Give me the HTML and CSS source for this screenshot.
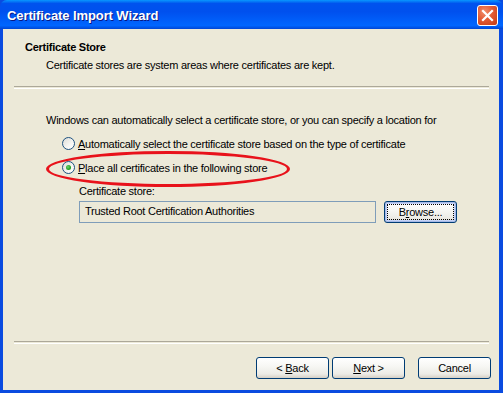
FILE: index.html
```html
<!DOCTYPE html>
<html lang="en">
<head>
    <meta charset="UTF-8">
    <title>Certificate Import Wizard</title>
    <link rel="stylesheet" href="styles.css">
</head>
<body>
    <div class="window">
        <div class="titlebar">
            <span class="title">Certificate Import Wizard</span>
            <button class="close-btn" aria-label="Close">
                <svg width="13" height="13" viewBox="0 0 13 13">
                    <path d="M2 2 L11 11 M11 2 L2 11" stroke="#fff" stroke-width="2.2" stroke-linecap="square"/>
                </svg>
            </button>
        </div>
        <div class="client">
            <div class="header">
                <div class="header-title">Certificate Store</div>
                <div class="header-sub">Certificate stores are system areas where certificates are kept.</div>
            </div>
            <div class="separator"></div>

            <div class="body">
                <p class="intro">Windows can automatically select a certificate store, or you can specify a location for</p>
                <label class="radio-row">
                    <span class="radio"></span>
                    <span><u>A</u>utomatically select the certificate store based on the type of certificate</span>
                </label>
                <label class="radio-row">
                    <span class="radio checked"></span>
                    <span><u>P</u>lace all certificates in the following store</span>
                </label>
                <div class="highlight"></div>

                <div class="store">
                    <div class="store-label">Certificate store:</div>
                    <div class="store-row">
                        <div class="textbox">Trusted Root Certification Authorities</div>
                        <button class="btn focused"><span class="focus-ring">B<u>r</u>owse...</span></button>
                    </div>
                </div>
            </div>

            <div class="separator"></div>
            <div class="footer">
                <button class="btn">&lt; <u>B</u>ack</button>
                <button class="btn"><u>N</u>ext &gt;</button>
                <button class="btn cancel">Cancel</button>
            </div>
        </div>
    </div>
</body>
</html>
```
FILE: styles.css
```css
body {
    margin: 0;
    padding: 0;
    font-family: "Liberation Sans", Arial, sans-serif;
    font-size: 11px;
    letter-spacing: -0.25px;
    color: #000;
}

.window {
    width: 503px;
    height: 393px;
    display: flex;
    flex-direction: column;
    background-color: #0a4be0;
}

/* Title bar */
.titlebar {
    height: 29px;
    flex: none;
    display: flex;
    align-items: center;
    justify-content: space-between;
    padding: 0 5px 0 7px;
    box-sizing: border-box;
    border-radius: 7px 7px 0 0;
    background: linear-gradient(to bottom, #0997ff 0%, #0053ee 12%, #0050ee 40%, #0066ff 88%, #0046d5 100%);
}

.title {
    color: #fff;
    font-family: "Liberation Sans", Arial, sans-serif;
    font-weight: bold;
    font-size: 13px;
    letter-spacing: -0.1px;
    text-shadow: 1px 1px 0 #0a1883;
    padding-top: 1px;
}

.close-btn {
    width: 21px;
    height: 21px;
    padding: 0;
    border: 1px solid #fff;
    border-radius: 3px;
    display: flex;
    align-items: center;
    justify-content: center;
    background: radial-gradient(circle at 35% 30%, #f08f6c 0%, #e35a34 45%, #c33a12 100%);
    margin-top: 2px;
}

/* Client area */
.client {
    flex: 1;
    margin: 0 4px 3px 3px;
    background-color: #ece9d8;
    display: flex;
    flex-direction: column;
    position: relative;
}

.header {
    height: 57px;
    padding: 12px 0 0 22px;
    box-sizing: border-box;
}

.header-title {
    font-weight: bold;
    line-height: 13px;
}

.header-sub {
    margin-top: 5px;
    padding-left: 21px;
    line-height: 13px;
}

.separator {
    height: 1px;
    margin: 0 10px 0 11px;
    border-top: 1px solid #aca899;
    border-bottom: 1px solid #fff;
    flex: none;
}

.body {
    flex: 1;
    padding: 25px 0 0 43px;
    position: relative;
}

.intro {
    margin: 0 0 10px 0;
    line-height: 13px;
}

.radio-row {
    display: flex;
    align-items: center;
    gap: 3px;
    margin-left: 16px;
    height: 13px;
    margin-bottom: 11px;
}

.radio {
    width: 11px;
    height: 11px;
    border: 1px solid #1c5180;
    border-radius: 50%;
    background: linear-gradient(135deg, #dcdcd7 0%, #f6f6f3 60%, #ffffff 100%);
    display: flex;
    align-items: center;
    justify-content: center;
}

.radio.checked::after {
    content: "";
    width: 5px;
    height: 5px;
    border-radius: 50%;
    background: radial-gradient(circle at 40% 40%, #6ed36e 0%, #21a121 60%, #1a8a1a 100%);
}

/* Red ellipse drawn over the second option */
.highlight {
    position: absolute;
    left: 43px;
    top: 62px;
    width: 238px;
    height: 30px;
    border: 3px solid #e8121b;
    border-radius: 50%;
}

.store {
    margin-left: 33px;
    margin-top: 1px;
}

.store-label {
    line-height: 13px;
}

.store-row {
    display: flex;
    align-items: flex-start;
    gap: 8px;
    margin-top: 3px;
}

.textbox {
    width: 297px;
    height: 22px;
    box-sizing: border-box;
    border: 1px solid #7f9db9;
    padding: 3px 0 0 5px;
    line-height: 13px;
}

.btn {
    width: 73px;
    height: 22px;
    padding: 0;
    font-family: inherit;
    font-size: 11px;
    letter-spacing: inherit;
    color: #000;
    border: 1px solid #003c74;
    border-radius: 3px;
    background: linear-gradient(to bottom, #ffffff 0%, #f7f7f4 40%, #ecebe6 80%, #d6d0c5 100%);
    box-sizing: border-box;
}

.btn.focused {
    padding: 1px;
    box-shadow: inset 0 0 0 1px #a5b9e6, inset 0 0 0 2px #c6d3f7;
}

.focus-ring {
    display: flex;
    align-items: center;
    justify-content: center;
    height: 100%;
    outline: 1px dotted #000;
    outline-offset: -2px;
}

.footer {
    height: 46px;
    display: flex;
    align-items: flex-start;
    padding: 13px 0 0 253px;
    box-sizing: border-box;
    gap: 3px;
}

.btn.cancel {
    margin-left: 10px;
}
```
